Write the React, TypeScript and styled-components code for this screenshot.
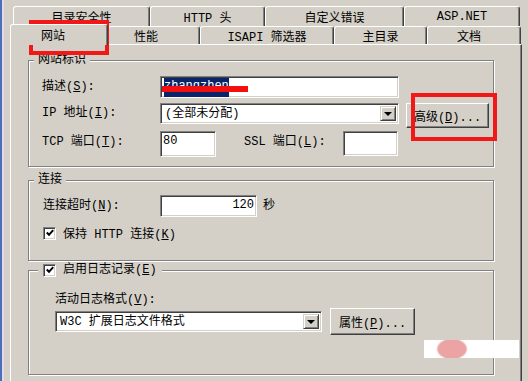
import styled, { createGlobalStyle, css } from "styled-components";

const GlobalStyle = createGlobalStyle`
  html, body {
    margin: 0;
    padding: 0;
    background: #d4d0c8;
  }
  body {
    font-family: "Liberation Mono", "Noto Sans CJK SC", monospace;
    font-size: 12px;
    color: #000;
  }
  u {
    text-underline-offset: 1px;
  }
`;

const sunken = css`
  box-sizing: border-box;
  background: #fff;
  border: 1px solid;
  border-color: #808080 #fff #fff #808080;
  box-shadow: inset 1px 1px 0 #404040, inset -1px -1px 0 #d4d0c8;
`;

const raised = css`
  box-sizing: border-box;
  background: #d4d0c8;
  border: 1px solid;
  border-color: #fff #404040 #404040 #fff;
  box-shadow: inset -1px -1px 0 #808080;
`;

const Dialog = styled.div`
  position: relative;
  width: 528px;
  height: 381px;
  overflow: hidden;
  box-sizing: border-box;
  padding-top: 6px;
  border-left: 2px solid #4d6fb5;
  box-shadow: inset 2px 0 0 #e2d8ea;
  background: #d4d0c8;
`;

const TabRow = styled.div<{ $indent: number; $h: number }>`
  display: flex;
  align-items: flex-end;
  height: ${p => p.$h}px;
  padding-left: ${p => p.$indent}px;
`;

const Tab = styled.div<{ $w: number; $active?: boolean; $shift?: number }>`
  box-sizing: border-box;
  width: ${p => p.$w}px;
  height: 100%;
  display: flex;
  align-items: center;
  justify-content: center;
  padding-right: ${p => p.$shift ?? 0}px;
  background: #d4d0c8;
  border-top: 1px solid #fff;
  border-left: 1px solid #fff;
  border-right: 1px solid #404040;
  border-radius: 3px 3px 0 0;
  box-shadow: inset -1px 0 0 #808080;
  white-space: nowrap;
  ${p => p.$active && css`
    position: relative;
    z-index: 1;
    height: 21px;
    margin-bottom: -1px;
  `}
`;

const Panel = styled.div`
  box-sizing: border-box;
  width: 512px;
  height: 340px;
  margin-left: 8px;
  padding: 7px 0 0 17px;
  border-top: 1px solid #fff;
  border-left: 1px solid #fff;
  border-right: 1px solid #404040;
  box-shadow: inset -1px 0 0 #808080;
  display: flex;
  flex-direction: column;
  align-items: flex-start;
`;

const Group = styled.fieldset<{ $h: number; $top?: number }>`
  box-sizing: border-box;
  width: 466px;
  height: ${p => p.$h}px;
  margin: ${p => p.$top ?? 0}px 0 0;
  padding: 0;
  min-inline-size: 0;
  border: 1px solid #808080;
  box-shadow: inset 1px 1px 0 #fff, 1px 1px 0 #fff;
`;

const Caption = styled.legend<{ $inset: number; $pad: number }>`
  margin-left: ${p => p.$inset}px;
  padding: 0 ${p => p.$pad}px;
  height: 16px;
  line-height: 16px;
  background: #d4d0c8;
  white-space: nowrap;
`;

const Body = styled.div<{ $top: number; $left: number }>`
  display: flex;
  flex-direction: column;
  align-items: flex-start;
  padding: ${p => p.$top}px 0 0 ${p => p.$left}px;
`;

const Row = styled.div<{ $top?: number; $center?: boolean }>`
  display: flex;
  align-items: ${p => (p.$center ? "center" : "flex-start")};
  margin-top: ${p => p.$top ?? 0}px;
`;

const Label = styled.span<{ $w?: number; $h?: number; $gap?: number }>`
  width: ${p => (p.$w ? `${p.$w}px` : "auto")};
  line-height: ${p => p.$h ?? 16}px;
  margin-left: ${p => p.$gap ?? 0}px;
  white-space: nowrap;
`;

const Field = styled.div<{ $w: number; $h: number; $right?: boolean }>`
  ${sunken};
  position: relative;
  width: ${p => p.$w}px;
  height: ${p => p.$h}px;
  padding: 1px 2px 0;
  line-height: 16px;
  display: flex;
  justify-content: ${p => (p.$right ? "flex-end" : "flex-start")};
  white-space: nowrap;
`;

const Selected = styled.span`
  background: #0a246a;
  color: #fff;
  margin-left: 1px;
`;

const Scribble = styled.div`
  position: absolute;
  left: 1px;
  top: 9px;
  width: 86px;
  height: 6px;
  background: #f40f0f;
`;

const Combo = styled.div<{ $w: number }>`
  ${sunken};
  width: ${p => p.$w}px;
  height: 21px;
  padding: 2px;
  display: flex;
  align-items: stretch;
`;

const ComboText = styled.span`
  flex: 1;
  padding-left: 2px;
  line-height: 17px;
  white-space: nowrap;
  overflow: hidden;
`;

const DropButton = styled.span`
  ${raised};
  border-color: #d4d0c8 #404040 #404040 #d4d0c8;
  box-shadow: inset 1px 1px 0 #fff, inset -1px -1px 0 #808080;
  width: 16px;
  display: flex;
  align-items: center;
  justify-content: center;

  &::after {
    content: "";
    border-top: 4px solid #000;
    border-left: 4px solid transparent;
    border-right: 4px solid transparent;
    margin-top: 1px;
  }
`;

const Button = styled.button<{ $w: number; $h: number; $gap?: number }>`
  ${raised};
  width: ${p => p.$w}px;
  height: ${p => p.$h}px;
  margin-left: ${p => p.$gap ?? 0}px;
  padding: 0;
  font: inherit;
  color: #000;
  white-space: nowrap;
`;

const CheckLine = styled.span<{ $h?: number }>`
  display: inline-flex;
  align-items: center;
  gap: 7px;
  height: ${p => p.$h ?? 16}px;
  vertical-align: top;
`;

const CheckBox = styled.span`
  ${sunken};
  width: 13px;
  height: 13px;
  display: inline-flex;
  align-items: center;
  justify-content: center;
`;

const Annotation = styled.div<{ $x: number; $y: number; $w: number; $h: number }>`
  position: absolute;
  left: ${p => p.$x}px;
  top: ${p => p.$y}px;
  width: ${p => p.$w}px;
  height: ${p => p.$h}px;
  box-sizing: border-box;
  border: 4px solid #f21818;
  pointer-events: none;
`;

const Smudge = styled.div`
  position: absolute;
  left: 422px;
  top: 340px;
  width: 95px;
  height: 18px;
  background:
    radial-gradient(ellipse 16px 11px at 28px 9px, #eba3a3 0 85%, transparent 100%),
    #fff;
`;

function Check() {
  return (
    <CheckBox>
      <svg width="8" height="8" viewBox="0 0 8 8">
        <polyline points="0.8,3.5 3,5.8 7.2,1.2" fill="none" stroke="#000" strokeWidth="2" />
      </svg>
    </CheckBox>
  );
}

export default function App() {
  return (
    <Dialog>
      <GlobalStyle />
      <TabRow $indent={11} $h={20}>
        <Tab $w={137}>目录安全性</Tab>
        <Tab $w={115}>HTTP 头</Tab>
        <Tab $w={139}>自定义错误</Tab>
        <Tab $w={116}>ASP.NET</Tab>
      </TabRow>
      <TabRow $indent={8} $h={18}>
        <Tab $w={98} $active $shift={12}>网站</Tab>
        <Tab $w={92} $shift={16}>性能</Tab>
        <Tab $w={134}>ISAPI 筛选器</Tab>
        <Tab $w={93}>主目录</Tab>
        <Tab $w={94} $shift={10}>文档</Tab>
      </TabRow>

      <Panel>
        <Group $h={115}>
          <Caption $inset={5} $pad={4}>网站标识</Caption>
          <Body $top={8} $left={13}>
            <Row>
              <Label $w={118} $h={22}>描述(<u>S</u>):</Label>
              <Field $w={239} $h={22}>
                <Selected>zhangzhen</Selected>
                <Scribble />
              </Field>
            </Row>
            <Row $top={5}>
              <Label $w={118} $h={21}>IP 地址(<u>I</u>):</Label>
              <Combo $w={239}>
                <ComboText>(全部未分配)</ComboText>
                <DropButton />
              </Combo>
              <Button $w={83} $h={25} $gap={7}>高级(<u>D</u>)...</Button>
            </Row>
            <Row $top={3}>
              <Label $w={118} $h={22}>TCP 端口(<u>T</u>):</Label>
              <Field $w={56} $h={26}>80</Field>
              <Label $w={99} $h={22} $gap={28}>SSL 端口(<u>L</u>):</Label>
              <Field $w={55} $h={25} />
            </Row>
          </Body>
        </Group>

        <Group $h={89} $top={5}>
          <Caption $inset={5} $pad={4}>连接</Caption>
          <Body $top={7} $left={14}>
            <Row>
              <Label $w={117} $h={22}>连接超时(<u>N</u>):</Label>
              <Field $w={97} $h={22} $right>120</Field>
              <Label $h={22} $gap={6}>秒</Label>
            </Row>
            <Row $top={7}>
              <CheckLine $h={18}>
                <Check />
                <span>保持 HTTP 连接(<u>K</u>)</span>
              </CheckLine>
            </Row>
          </Body>
        </Group>

        <Group $h={113} $top={1}>
          <Caption $inset={9} $pad={5}>
            <CheckLine>
              <Check />
              <span>启用日志记录(<u>E</u>)</span>
            </CheckLine>
          </Caption>
          <Body $top={14} $left={26}>
            <Label>活动日志格式(<u>V</u>):</Label>
            <Row $center>
              <Combo $w={267}>
                <ComboText>W3C 扩展日志文件格式</ComboText>
                <DropButton />
              </Combo>
              <Button $w={85} $h={27} $gap={8}>属性(<u>P</u>)...</Button>
            </Row>
          </Body>
        </Group>
      </Panel>

      <Annotation $x={27} $y={20} $w={80} $h={35} />
      <Annotation $x={409} $y={93} $w={86} $h={48} />
      <Smudge />
    </Dialog>
  );
}
